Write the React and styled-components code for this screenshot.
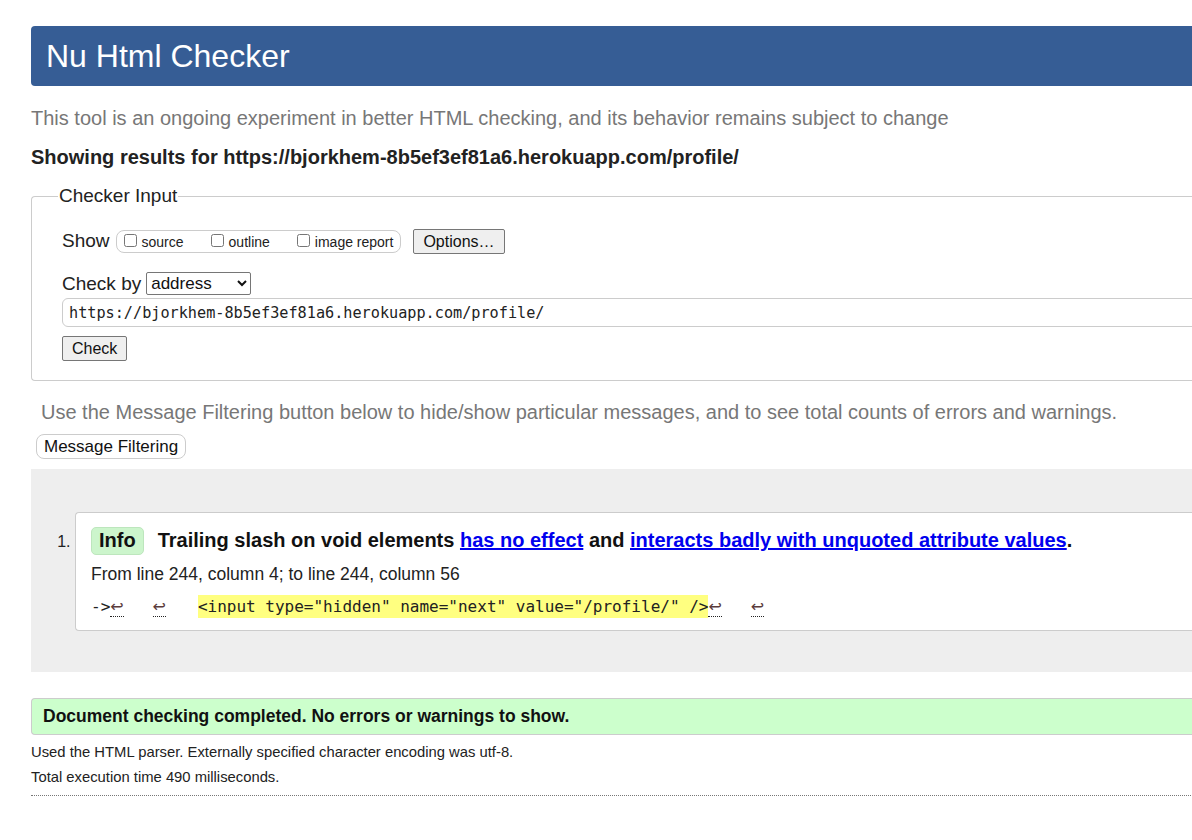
import React from 'react'
import styled, { createGlobalStyle } from 'styled-components'

const GlobalStyle = createGlobalStyle`
  html, body {
    margin: 0;
    padding: 0;
    overflow: hidden;
    background: #fff;
  }
  body {
    font-family: "Liberation Sans", Arial, sans-serif;
    color: #222;
  }
`

const Page = styled.div`
  width: 1260px;
  padding: 26px 0 0 31px;
`

const Header = styled.h1`
  margin: 0;
  height: 60px;
  display: flex;
  align-items: center;
  padding-left: 15px;
  background: #365d95;
  color: #fff;
  font-size: 32px;
  font-weight: normal;
  border-radius: 4px 0 0 4px;
`

const Intro = styled.p`
  margin: 21px 0 0;
  font-size: 20px;
  color: #777;
`

const Showing = styled.p`
  margin: 16px 0 0;
  font-size: 20px;
  font-weight: bold;
  color: #222;
`

const Fieldset = styled.fieldset`
  margin: 16px 0 0;
  padding: 22px 0 19px 30px;
  border: 1px solid #ccc;
  border-radius: 4px 0 0 4px;
  border-right: none;
  legend {
    font-size: 19px;
    padding: 0 1px;
    margin-left: -4px;
    color: #222;
  }
`

const Row = styled.div`
  display: flex;
  align-items: center;
  gap: ${p => p.gap || 0}px;
  margin-bottom: ${p => p.mb || 0}px;
  font-size: 19px;
`

const Group = styled.span`
  display: inline-flex;
  align-items: center;
  height: 21px;
  margin-left: 6px;
  padding: 0 7px 0 4px;
  border: 1px solid #ccc;
  border-radius: 8px;
  font-size: 14px;
  label {
    display: inline-flex;
    align-items: center;
    margin-right: 24px;
  }
  label:last-child { margin-right: 0; }
  input {
    margin: 0 5px 3px 3px;
    width: 13px;
    height: 13px;
  }
`

const Button = styled.button`
  font-family: "Liberation Sans", Arial, sans-serif;
  font-size: ${p => p.size || 16}px;
  color: #111;
  background: #efefef;
  border: 1px solid #767676;
  border-radius: ${p => p.radius || 2}px;
  padding: 0 9px;
  height: ${p => p.h || 25}px;
  ${p => p.soft && `
    background: #fff;
    border-color: #ccc;
    padding: 0 7px;
  `}
`

const Select = styled.select`
  font-family: "Liberation Sans", Arial, sans-serif;
  font-size: 17px;
  width: 105px;
  height: 23px;
  margin-left: 5px;
  color: #111;
  border: 1px solid #767676;
  border-radius: 2px;
  background: #fff;
`

const UrlInput = styled.input`
  display: block;
  width: 1200px;
  height: 29px;
  box-sizing: border-box;
  margin: 3px 0 9px;
  padding: 0 6px;
  font-family: "DejaVu Sans Mono", "Liberation Mono", monospace;
  font-size: 15.2px;
  color: #222;
  border: 1px solid #ccc;
  border-radius: 6px 0 0 6px;
`

const FilterNote = styled.p`
  margin: 20px 0 0 10px;
  font-size: 20px;
  color: #777;
`

const FilterButton = styled(Button)`
  margin: 10px 0 0 5px;
`

const Results = styled.div`
  margin-top: 10px;
  padding: 43px 0 41px 0;
  background: #eee;
`

const List = styled.ol`
  margin: 0;
  padding: 0 0 0 44px;
  font-size: 16px;
  li::marker { color: #222; }
`

const Card = styled.li`
  background: #fff;
  border: 1px solid #ccc;
  border-right: none;
  border-radius: 4px 0 0 4px;
  padding: 14px 0 14px 15px;
  margin-left: 0;
  &::marker { font-size: 16px; }
`

const Message = styled.p`
  margin: 0;
  font-size: 20px;
  font-weight: bold;
  color: #111;
  a { color: #00e; }
`

const Badge = styled.span`
  display: inline-block;
  padding: 1px 7px 2px;
  margin-right: 14px;
  background: #ccf5cc;
  border: 1px solid #bde6bd;
  border-radius: 5px;
`

const Location = styled.p`
  margin: 9px 0 0;
  font-size: 17.5px;
  color: #222;
`

const Extract = styled.p`
  margin: 12px 0 0;
  font-family: "DejaVu Sans Mono", "Liberation Mono", monospace;
  font-size: 16px;
  color: #222;
  white-space: pre;
  mark {
    background: #ffff80;
    color: #222;
    padding: 2px 0;
    margin-left: 3px;
  }
`

const Lf = styled.b`
  font-weight: normal;
  font-family: "DejaVu Sans", sans-serif;
  color: #5a3b3b;
  border-bottom: 1px dotted #222;
  font-size: 16px;
`

const Success = styled.p`
  margin: 26px 0 0;
  padding: 7px 11px;
  background: #ccffcc;
  border: 1px solid #ccc;
  border-right: none;
  border-radius: 4px 0 0 4px;
  font-size: 17.5px;
  font-weight: bold;
  color: #111;
`

const Details = styled.p`
  margin: ${p => p.mt}px 0 0;
  font-size: 14.8px;
  color: #222;
`

const Rule = styled.hr`
  margin: 10px 0 0;
  border: none;
  border-top: 1px dotted #777;
`

export default function App() {
  return (
    <Page>
      <GlobalStyle />
      <Header>Nu Html Checker</Header>
      <Intro>This tool is an ongoing experiment in better HTML checking, and its behavior remains subject to change</Intro>
      <Showing>Showing results for https://bjorkhem-8b5ef3ef81a6.herokuapp.com/profile/</Showing>
      <Fieldset>
        <legend>Checker Input</legend>
        <Row gap={12} mb={18}>
          <span>
            Show
            <Group>
              <label><input type="checkbox" />source</label>
              <label><input type="checkbox" />outline</label>
              <label><input type="checkbox" />image report</label>
            </Group>
          </span>
          <Button>Options…</Button>
        </Row>
        <Row>
          Check by
          <Select defaultValue="address">
            <option value="address">address</option>
          </Select>
        </Row>
        <UrlInput defaultValue="https://bjorkhem-8b5ef3ef81a6.herokuapp.com/profile/" />
        <Button>Check</Button>
      </Fieldset>
      <FilterNote>Use the Message Filtering button below to hide/show particular messages, and to see total counts of errors and warnings.</FilterNote>
      <FilterButton soft radius={8} h={25} size={17}>Message Filtering</FilterButton>
      <Results>
        <List>
          <Card>
            <Message>
              <Badge>Info</Badge>
              Trailing slash on void elements <a href="#a">has no effect</a> and <a href="#b">interacts badly with unquoted attribute values</a>.
            </Message>
            <Location>From line 244, column 4; to line 244, column 56</Location>
            <Extract>
              {'->'}<Lf>↩</Lf>{'   '}<Lf>↩</Lf>{'   '}<mark>{'<input type="hidden" name="next" value="/profile/" />'}</mark><Lf>↩</Lf>{'   '}<Lf>↩</Lf>
            </Extract>
          </Card>
        </List>
      </Results>
      <Success>Document checking completed. No errors or warnings to show.</Success>
      <Details mt={9}>Used the HTML parser. Externally specified character encoding was utf-8.</Details>
      <Details mt={9}>Total execution time 490 milliseconds.</Details>
      <Rule />
    </Page>
  )
}
